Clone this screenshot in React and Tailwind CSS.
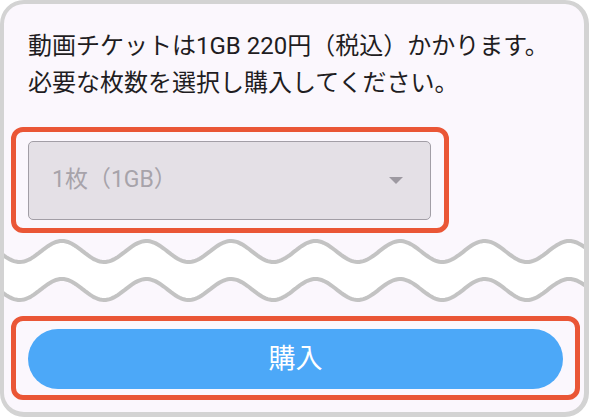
import React from "react";

const wavePoints = (yc, amp, from, to, step) => {
    let pts = [];
    for (let x = from; x <= to; x += step) {
        let y = yc - amp * Math.cos((2 * Math.PI * (x - 58)) / 84.7);
        pts.push([x, y]);
    }
    return pts;
};

const toPath = (pts) => pts.map((p, i) => (i === 0 ? "M" : "L") + p[0].toFixed(1) + " " + p[1].toFixed(1)).join(" ");

const Waves = () => {
    let top = wavePoints(18.5, 10.5, -4, 590, 2);
    let bottom = wavePoints(56.5, 10.5, -4, 590, 2);
    let area = toPath(top) + " " + toPath([...bottom].reverse()).replace("M", "L") + " Z";

    return (
        <svg className="block w-full h-[83px]" viewBox="0 0 581 83" preserveAspectRatio="none">
            <path d={area} fill="#ffffff" />
            <path d={toPath(top)} fill="none" stroke="#c3c3c3" strokeWidth="4" />
            <path d={toPath(bottom)} fill="none" stroke="#c3c3c3" strokeWidth="4" />
        </svg>
    );
};

const App = () => {
    return (
        <div
            className="w-[590px] h-[419px] bg-white overflow-hidden"
            style={{ fontFamily: 'Roboto, "Noto Sans CJK JP", sans-serif' }}
        >
            <div className="w-[589px] h-[417px] flex flex-col bg-[#fbf7fd] border-l-4 border-t-4 border-r-[5px] border-b-[5px] border-[#d3d3d3] rounded-[24px] overflow-hidden">
                <p className="pl-6 pt-6 text-[24px] leading-[37px] text-[#1f1d22]">
                    動画チケットは1GB 220円（税込）かかります。
                    <br />
                    必要な枚数を選択し購入してください。
                </p>

                <div className="ml-[7px] mt-[25px] w-[438px] h-[106px] border-[5px] border-[#ea5636] rounded-[12px] pl-[12px] pt-[9px]">
                    <div className="w-[403px] h-[79px] flex items-center justify-between bg-[#e4e0e6] border-[1.5px] border-[#a29ea6] rounded-[5px] pl-[23px] pr-[27px]">
                        <span className="text-[23px] text-[#a7a3aa]">1枚（1GB）</span>
                        <span className="w-0 h-0 border-l-[7px] border-r-[7px] border-t-[7px] border-l-transparent border-r-transparent border-t-[#9d99a1]" />
                    </div>
                </div>

                <Waves />

                <div className="ml-[7px] w-[569px] h-[84px] border-[5px] border-[#ea5636] rounded-[12px] px-[12px] pt-[8px]">
                    <button className="w-full h-[60px] rounded-full bg-[#4ca8f8] text-white text-[27px] flex items-center justify-center">
                        購入
                    </button>
                </div>
            </div>
        </div>
    );
};

export default App;
